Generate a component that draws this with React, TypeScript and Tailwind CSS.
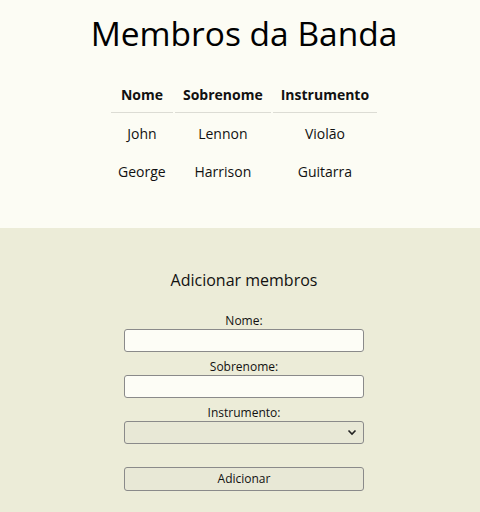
import React from "react";

const membros = [
  { nome: "John", sobrenome: "Lennon", instrumento: "Violão" },
  { nome: "George", sobrenome: "Harrison", instrumento: "Guitarra" },
];

export default function App() {
  return (
    <div className="min-h-[512px] font-['Open_Sans',sans-serif] text-[#111]">
      <section className="h-[228px] bg-[#fcfcf4] pl-2 flex flex-col items-center">
        <h1 className="mt-[11px] text-[33.5px] leading-[44px] text-black">
          Membros da Banda
        </h1>
        <table className="mt-[27px] border-separate border-spacing-[2px] text-[14px]">
          <thead>
            <tr>
              <th className="px-[10px] pb-[7px] border-b border-[#dcdcd4] font-bold">Nome</th>
              <th className="px-[8px] pb-[7px] border-b border-[#dcdcd4] font-bold">Sobrenome</th>
              <th className="px-[8px] pb-[7px] border-b border-[#dcdcd4] font-bold">Instrumento</th>
            </tr>
          </thead>
          <tbody>
            {membros.map((m) => (
              <tr key={m.nome}>
                <td className="text-center h-[36px]">{m.nome}</td>
                <td className="text-center h-[36px]">{m.sobrenome}</td>
                <td className="text-center h-[36px]">{m.instrumento}</td>
              </tr>
            ))}
          </tbody>
        </table>
      </section>

      <section className="h-[284px] bg-[#ececd8] pl-2 flex flex-col items-center">
        <h2 className="mt-[41px] text-[16px] leading-[22px]">Adicionar membros</h2>
        <form className="mt-[19px] w-[240px] flex flex-col items-center text-[12px]">
          <label className="leading-[17px] mt-[2px]">Nome:</label>
          <input className="w-full h-[23px] rounded-[3px] border border-[#8a8a8a] bg-[#fdfdf6]" />
          <label className="leading-[17px] mt-[6px]">Sobrenome:</label>
          <input className="w-full h-[23px] rounded-[3px] border border-[#8a8a8a] bg-[#fdfdf6]" />
          <label className="leading-[17px] mt-[6px]">Instrumento:</label>
          <div className="relative w-full h-[23px] rounded-[3px] border border-[#8a8a8a] bg-[#e8e8d6]">
            <svg
              className="absolute right-[6px] top-[7px]"
              width="10"
              height="7"
              viewBox="0 0 10 7"
              fill="none"
              stroke="#222"
              strokeWidth="1.6"
            >
              <path d="M1.5 1.5 L5 5 L8.5 1.5" />
            </svg>
          </div>
          <button
            type="button"
            className="mt-[23px] w-full h-[24px] rounded-[3px] border border-[#8a8a8a] bg-[#e8e8d6] text-[12px] text-[#111]"
          >
            Adicionar
          </button>
        </form>
      </section>
    </div>
  );
}
